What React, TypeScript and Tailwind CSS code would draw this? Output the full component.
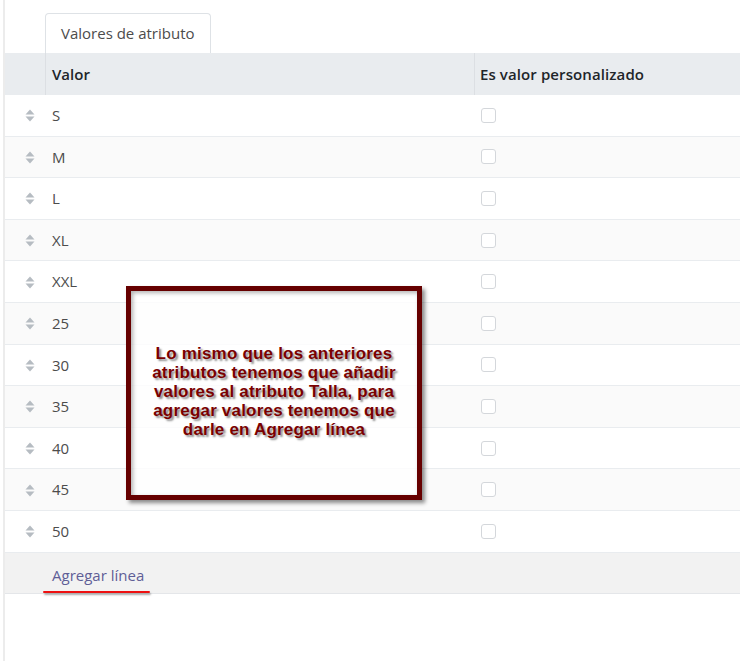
const VALUES = ['S', 'M', 'L', 'XL', 'XXL', '25', '30', '35', '40', '45', '50'];

function Handle() {
  return (
    <svg width="10" height="13" viewBox="0 0 10 13" className="shrink-0">
      <path d="M5 0.5 L9.5 5.5 L0.5 5.5 Z" fill="#b6bcc2" />
      <path d="M0.5 7.5 L9.5 7.5 L5 12.5 Z" fill="#b6bcc2" />
    </svg>
  );
}

export default function App() {
  return (
    <div
      className="relative w-[740px] h-[661px] overflow-hidden bg-white text-[15px] text-[#4c4c4c]"
      style={{ fontFamily: '"Open Sans", "Noto Sans", sans-serif' }}
    >
      <div className="ml-[3px] h-full border-l-2 border-[#ececec] pt-[13px]">
        {/* Tabs */}
        <div className="flex pl-[40px]">
          <div className="h-[40px] px-[15px] flex items-center rounded-t-[4px] border border-b-0 border-[#dee2e6] bg-white text-[#4c4c4c]">
            Valores de atributo
          </div>
        </div>

        {/* Header */}
        <div className="flex h-[42px] bg-[#e9ecef] font-semibold text-[#212529]">
          <div className="w-[41px] border-r border-[#dcdfe3]" />
          <div className="w-[429px] flex items-center pl-[6px] border-r border-[#dcdfe3]">Valor</div>
          <div className="flex-1 flex items-center pl-[5px] tracking-[0.1px]">Es valor personalizado</div>
        </div>

        {/* Rows */}
        {VALUES.map((v, i) => (
          <div
            key={v}
            className={`flex h-[41.6px] border-b border-[#e9ecef] ${i % 2 === 1 ? 'bg-[#fafafa]' : 'bg-white'}`}
          >
            <div className="w-[41px] flex items-center justify-center pl-[9px] pt-px">
              <Handle />
            </div>
            <div className="w-[429px] flex items-center pl-[6px]">{v}</div>
            <div className="flex-1 flex items-center pl-[6px]">
              <div className="w-[15px] h-[15px] rounded-[3px] border border-[#d4d7db] bg-white" />
            </div>
          </div>
        ))}

        {/* Add line */}
        <div className="flex h-[41px] items-center bg-[#f2f2f2] border-b border-[#e4e6e9]">
          <div className="pl-[47px] pt-[5px] text-[#5f5e97]">Agregar línea</div>
        </div>
      </div>

      {/* Hand-drawn underline */}
      <div className="absolute left-[43px] top-[591px] w-[107px] h-[2px] bg-[#ee1111] rounded-full shadow-[1px_2px_2px_rgba(0,0,0,0.35)]" />

      {/* Callout box */}
      <div className="absolute left-[126px] top-[286px] w-[296px] h-[214px] border-[5px] border-[#660000] bg-white/80 shadow-[3px_3px_4px_rgba(0,0,0,0.45),inset_2px_2px_4px_rgba(0,0,0,0.3)] flex items-center justify-center">
        <p
          className="text-center font-bold text-[17px] leading-[19px] tracking-[0.2px] text-[#7a0000] px-1 pb-1 whitespace-nowrap"
          style={{ fontFamily: '"Liberation Sans", Arial, sans-serif', textShadow: '2px 2px 2px rgba(0,0,0,0.45)' }}
        >
          Lo mismo que los anteriores
          <br />
          atributos tenemos que añadir
          <br />
          valores al atributo Talla, para
          <br />
          agregar valores tenemos que
          <br />
          darle en Agregar línea
        </p>
      </div>
    </div>
  );
}
